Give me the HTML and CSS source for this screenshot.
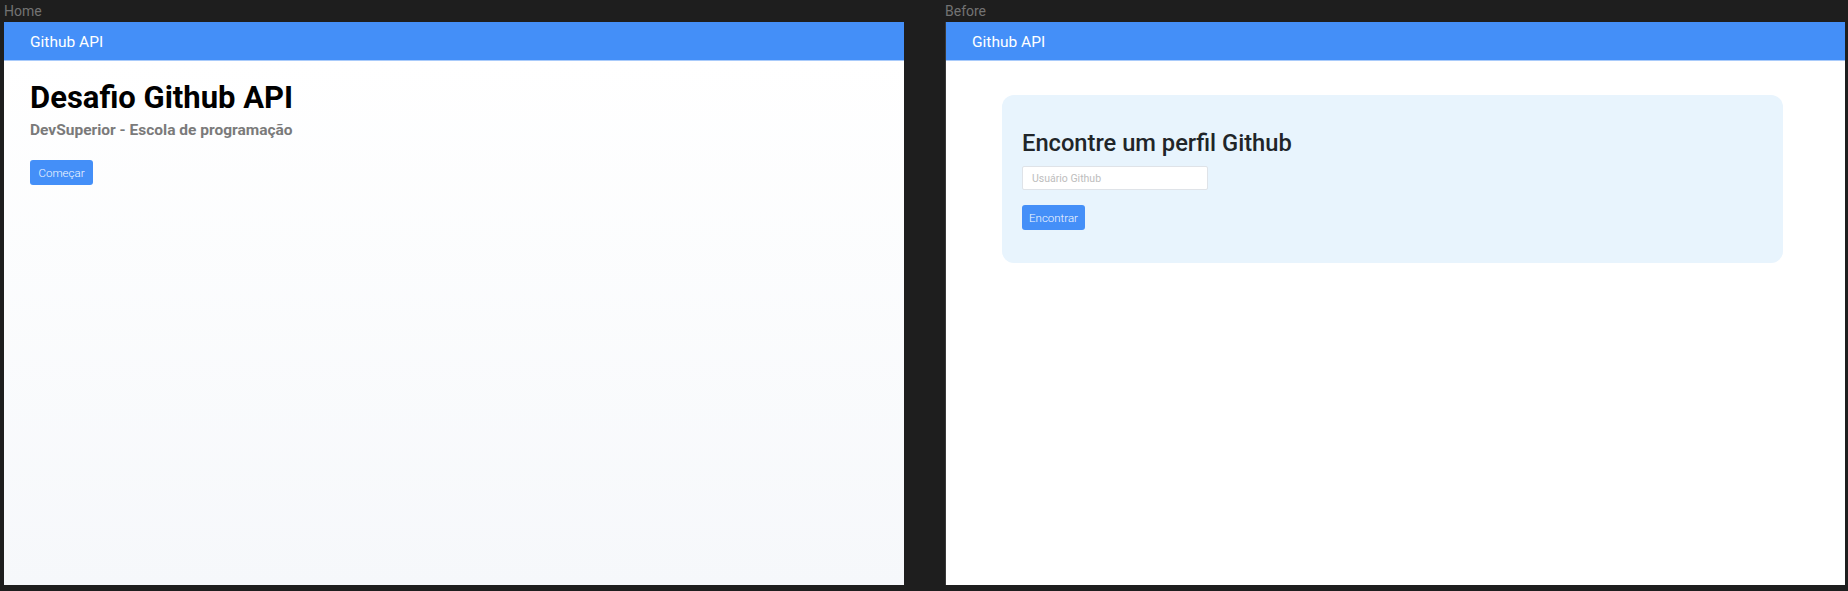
FILE: index.html
```html
<!DOCTYPE html>
<html lang="pt-BR">
<head>
<meta charset="utf-8">
<title>Github API</title>
<link rel="stylesheet" href="styles.css">
</head>
<body>
<div class="canvas">
  <section class="artboard">
    <div class="label">Home</div>
    <div class="frame frame-home">
      <header class="navbar"><span class="brand">Github API</span></header>
      <main class="home">
        <h1 class="home-title">Desafio Github API</h1>
        <p class="home-subtitle">DevSuperior - Escola de programação</p>
        <button class="btn">Começar</button>
      </main>
    </div>
  </section>
  <section class="artboard">
    <div class="label">Before</div>
    <div class="frame frame-search">
      <header class="navbar"><span class="brand">Github API</span></header>
      <main class="search">
        <div class="card">
          <h2 class="card-title">Encontre um perfil Github</h2>
          <input class="field" type="text" placeholder="Usuário Github">
          <button class="btn">Encontrar</button>
        </div>
      </main>
    </div>
  </section>
</div>
</body>
</html>
```

FILE: styles.css
```css
* { box-sizing: border-box; }
html, body {
  margin: 0;
  padding: 0;
  background: #1e1e1e;
  font-family: Roboto, "Liberation Sans", sans-serif;
}
.canvas {
  display: flex;
  gap: 41px;
  padding-left: 4px;
}
.artboard {
  display: flex;
  flex-direction: column;
}
.label {
  height: 22px;
  line-height: 22px;
  font-size: 14px;
  color: #737373;
}
.frame {
  width: 900px;
  height: 563px;
  display: flex;
  flex-direction: column;
  background: #ffffff;
}
.frame-search {
  border-left: 1px solid #3a3a3a;
}
.navbar {
  height: 39px;
  flex: none;
  background: #448ff8;
  border-bottom: 1px solid #a9cbfb;
  display: flex;
  align-items: center;
  padding-left: 26px;
}
.brand {
  color: #ffffff;
  font-size: 15.5px;
  font-weight: 400;
  padding-top: 1px;
}
.home {
  flex: 1;
  background: linear-gradient(#ffffff, #f6f8fb);
  padding: 18px 26px 0;
}
.home-title {
  margin: 0;
  font-size: 31px;
  line-height: 37px;
  font-weight: 700;
  color: #000000;
}
.home-subtitle {
  margin: 5px 0 0;
  font-size: 15.5px;
  line-height: 19px;
  font-weight: 700;
  color: #7a7a7a;
}
.btn {
  display: block;
  width: 63px;
  height: 25px;
  margin-top: 20px;
  border: none;
  border-radius: 3px;
  background: #448ff8;
  color: #f4f8ff;
  font-family: Roboto, "Liberation Sans", sans-serif;
  font-size: 11.5px;
  font-weight: 300;
  padding: 0;
}
.search {
  flex: 1;
  padding: 34px 62px 0 56px;
}
.card {
  background: #e8f4fd;
  border-radius: 12px;
  padding: 33px 20px 33px;
  height: 168px;
}
.card-title {
  margin: 0;
  font-size: 23.7px;
  line-height: 30px;
  font-weight: 500;
  color: #212529;
}
.field {
  display: block;
  margin-top: 8px;
  width: 186px;
  height: 24px;
  border: 1px solid #dfe3e8;
  border-radius: 2px;
  background: #ffffff;
  padding: 0 9px;
  font-family: Roboto, "Liberation Sans", sans-serif;
  font-size: 10.5px;
  outline: none;
}
.field::placeholder {
  color: #bdbdbd;
}
.card .btn {
  margin-top: 15px;
}
```
